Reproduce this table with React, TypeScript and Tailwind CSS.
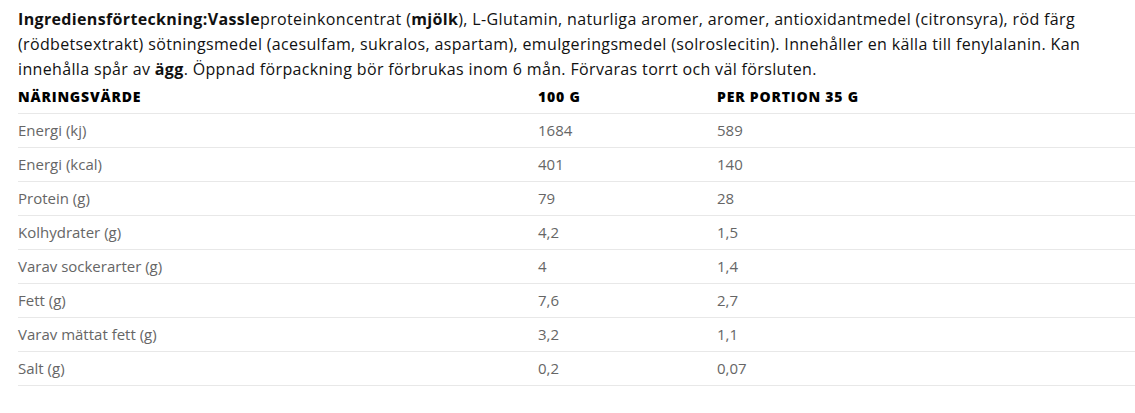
const rows: [string, string, string][] = [
  ['Energi (kj)', '1684', '589'],
  ['Energi (kcal)', '401', '140'],
  ['Protein (g)', '79', '28'],
  ['Kolhydrater (g)', '4,2', '1,5'],
  ['Varav sockerarter (g)', '4', '1,4'],
  ['Fett (g)', '7,6', '2,7'],
  ['Varav mättat fett (g)', '3,2', '1,1'],
  ['Salt (g)', '0,2', '0,07'],
];

export default function App() {
  return (
    <div className="bg-white pl-[18px] pt-[7px] font-['Open_Sans',sans-serif] text-[#111]">
      <p className="text-[16px] leading-[25px] tracking-[0.35px] whitespace-nowrap">
        <strong className="font-bold">Ingrediensförteckning:Vassle</strong>proteinkoncentrat (
        <strong className="font-bold">mjölk</strong>), L-Glutamin, naturliga aromer, aromer,
        antioxidantmedel (citronsyra), röd färg
        <br />
        (rödbetsextrakt) sötningsmedel (acesulfam, sukralos, aspartam), emulgeringsmedel
        (solroslecitin). Innehåller en källa till fenylalanin. Kan
        <br />
        innehålla spår av <strong className="font-bold">ägg</strong>. Öppnad förpackning bör
        förbrukas inom 6 mån. Förvaras torrt och väl försluten.
      </p>
      <table className="mt-[4px] w-[1117px] border-collapse text-left">
        <thead>
          <tr className="border-b border-[#e8e8e8]">
            <th className="w-[520px] pb-[6px] pt-0 text-[14px] font-extrabold uppercase tracking-[0.8px] text-black">
              Näringsvärde
            </th>
            <th className="w-[179px] pb-[6px] pt-0 text-[14px] font-extrabold uppercase tracking-[0.8px] text-black">
              100 g
            </th>
            <th className="pb-[6px] pt-0 text-[14px] font-extrabold uppercase tracking-[0.8px] text-black">
              Per portion 35 g
            </th>
          </tr>
        </thead>
        <tbody>
          {rows.map(([name, a, b]) => (
            <tr key={name} className="h-[34px] border-b border-[#e8e8e8] text-[15px] text-[#666]">
              <td className="align-middle">{name}</td>
              <td className="align-middle">{a}</td>
              <td className="align-middle">{b}</td>
            </tr>
          ))}
        </tbody>
      </table>
    </div>
  );
}
